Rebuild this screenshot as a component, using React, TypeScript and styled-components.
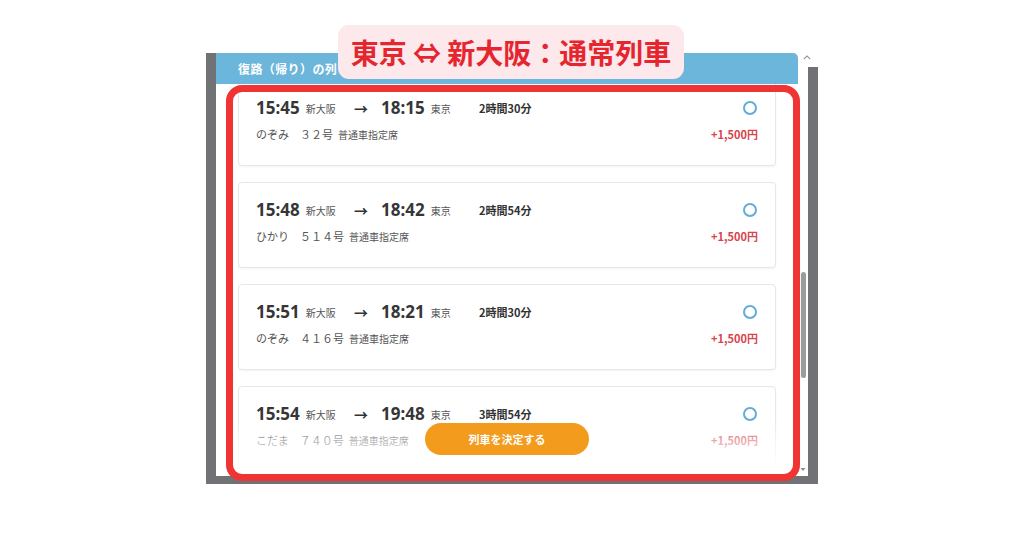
import React from 'react';
import styled, { createGlobalStyle } from 'styled-components';

type Train = {
  dep: string;
  arr: string;
  duration: string;
  name: string;
};

const trains: Train[] = [
  { dep: '15:45', arr: '18:15', duration: '2時間30分', name: 'のぞみ　３２号' },
  { dep: '15:48', arr: '18:42', duration: '2時間54分', name: 'ひかり　５１４号' },
  { dep: '15:51', arr: '18:21', duration: '2時間30分', name: 'のぞみ　４１６号' },
  { dep: '15:54', arr: '19:48', duration: '3時間54分', name: 'こだま　７４０号' },
];

function App() {
  return (
    <>
      <GlobalStyle />
      <Page>
        <Stage>
          <Frame>
            <Window>
              <Panel>
                <Header>
                  <HeaderText>復路（帰り）の列車を選択してください</HeaderText>
                </Header>
                <ListArea>
                  <List>
                    {trains.map((t) => (
                      <Card key={t.dep}>
                        <TopRow>
                          <Stop>
                            <Time>{t.dep}</Time>
                            <Station>新大阪</Station>
                          </Stop>
                          <Arrow>→</Arrow>
                          <Stop>
                            <Time>{t.arr}</Time>
                            <Station>東京</Station>
                          </Stop>
                          <Duration>{t.duration}</Duration>
                          <Radio />
                        </TopRow>
                        <BottomRow>
                          <TrainName>{t.name}</TrainName>
                          <SeatClass>普通車指定席</SeatClass>
                          <Price>+1,500円</Price>
                        </BottomRow>
                      </Card>
                    ))}
                  </List>
                  <Footer>
                    <DecideButton>列車を決定する</DecideButton>
                  </Footer>
                </ListArea>
              </Panel>
              <ScrollTrack>
                <ScrollArrow viewBox="0 0 10 6" $up>
                  <path d="M1 5 L5 1 L9 5" fill="none" stroke="#8a8a8a" strokeWidth="1.3" />
                </ScrollArrow>
                <Thumb />
                <ScrollArrow viewBox="0 0 10 6">
                  <path d="M2 1 L8 1 L5 5 Z" fill="#8a8a8a" />
                </ScrollArrow>
              </ScrollTrack>
            </Window>
          </Frame>
          <Highlight />
          <TitleLabel>東京 ⇔ 新大阪：通常列車</TitleLabel>
        </Stage>
      </Page>
    </>
  );
}
export default App;

const GlobalStyle = createGlobalStyle`
  body {
    margin: 0;
    background: #ffffff;
    font-family: "Noto Sans", "Noto Sans CJK JP", sans-serif;
  }
`;

const Page = styled.div`
  width: 1024px;
  height: 538px;
  display: flex;
  justify-content: center;
  padding-top: 53px;
  box-sizing: border-box;
`;

const Stage = styled.div`
  position: relative;
  width: 612px;
  height: 431px;
`;

const Frame = styled.div`
  position: relative;
  display: flex;
  height: 100%;
  box-sizing: border-box;
  padding: 0 10px 8px 10px;
  background: #717275;

  // white notch above the right gray strip
  &::after {
    content: "";
    position: absolute;
    top: 0;
    right: 0;
    width: 10px;
    height: 14px;
    background: #ffffff;
  }
`;

const Window = styled.div`
  display: flex;
  flex: 1;
  background: #ffffff;
`;

const Panel = styled.div`
  display: flex;
  flex-direction: column;
  width: 582px;
`;

const Header = styled.div`
  height: 31px;
  flex-shrink: 0;
  display: flex;
  align-items: center;
  padding-left: 22px;
  background: #6cb6db;
  border-top-right-radius: 5px;
`;

// the rest of the heading sits under the title label
const HeaderText = styled.span`
  max-width: 100px;
  overflow: hidden;
  white-space: nowrap;
  color: #ffffff;
  font-family: "Noto Sans CJK JP", sans-serif;
  font-size: 12px;
  font-weight: 700;
  letter-spacing: 0.4px;
`;

const ListArea = styled.div`
  position: relative;
  flex: 1;
  overflow: hidden;
`;

const List = styled.div`
  display: flex;
  flex-direction: column;
  gap: 16px;
  padding: 0 22px;
  margin-top: -4px;
`;

const Card = styled.div`
  height: 86px;
  box-sizing: border-box;
  flex-shrink: 0;
  padding: 17px 18px 0 17px;
  border: 1px solid #e7e7e7;
  border-radius: 4px;
  box-shadow: 0 1px 2px rgba(0, 0, 0, 0.05);
  background: #ffffff;
`;

const TopRow = styled.div`
  display: grid;
  grid-template-columns: 98px 27px 98px auto 1fr;
  align-items: center;
  height: 20px;
`;

const Stop = styled.div`
  display: flex;
  align-items: center;
`;

const Time = styled.span`
  font-size: 17px;
  font-weight: 700;
  color: #363636;
  line-height: 20px;
`;

const Station = styled.span`
  margin-left: 6px;
  font-family: "Noto Sans CJK JP", sans-serif;
  font-size: 10px;
  color: #555555;
`;

const Arrow = styled.span`
  font-size: 14px;
  font-weight: 700;
  color: #333333;
`;

const Duration = styled.span`
  font-family: "Noto Sans CJK JP", sans-serif;
  font-size: 11px;
  font-weight: 700;
  color: #333333;
`;

const Radio = styled.span`
  justify-self: end;
  width: 14px;
  height: 14px;
  box-sizing: border-box;
  border: 2px solid #62acd8;
  border-radius: 50%;
`;

const BottomRow = styled.div`
  display: flex;
  align-items: center;
  height: 16px;
  margin-top: 8px;
  font-family: "Noto Sans CJK JP", sans-serif;
`;

const TrainName = styled.span`
  font-size: 11px;
  color: #555555;
`;

const SeatClass = styled.span`
  margin-left: 5px;
  font-size: 10px;
  color: #555555;
`;

const Price = styled.span`
  margin-left: auto;
  margin-right: -1px;
  font-size: 11px;
  font-weight: 700;
  color: #d8444b;
`;

const Footer = styled.div`
  position: absolute;
  left: 0;
  right: 0;
  bottom: 0;
  height: 57px;
  display: flex;
  justify-content: center;
  padding-top: 4px;
  box-sizing: border-box;
  background: linear-gradient(
    rgba(255, 255, 255, 0) 0%,
    rgba(255, 255, 255, 0.55) 38%,
    #ffffff 85%
  );
`;

const DecideButton = styled.button`
  width: 164px;
  height: 32px;
  border: none;
  border-radius: 16px;
  background: #f29b1c;
  color: #ffffff;
  font-family: "Noto Sans CJK JP", sans-serif;
  font-size: 11px;
  font-weight: 700;
  cursor: pointer;
`;

const ScrollTrack = styled.div`
  position: relative;
  z-index: 1;
  width: 10px;
  display: flex;
  flex-direction: column;
  align-items: center;
`;

const ScrollArrow = styled.svg<{ $up?: boolean }>`
  width: 8px;
  height: 5px;
  margin-top: ${(p) => (p.$up ? '2px' : 'auto')};
  margin-bottom: ${(p) => (p.$up ? '0' : '4px')};
  margin-left: ${(p) => (p.$up ? '8px' : '0')};
`;

const Thumb = styled.div`
  width: 5px;
  height: 106px;
  margin-top: 212px;
  border-radius: 3px;
  background: #9b9b9d;
`;

const Highlight = styled.div`
  position: absolute;
  left: 20px;
  top: 32px;
  width: 574px;
  height: 396px;
  box-sizing: border-box;
  border: 7px solid #f03434;
  border-radius: 16px;
  pointer-events: none;
`;

const TitleLabel = styled.div`
  position: absolute;
  left: 132px;
  top: -28px;
  width: 346px;
  height: 54px;
  display: flex;
  align-items: center;
  justify-content: center;
  border-radius: 11px;
  background: #fde8eb;
  color: #e6262f;
  font-family: "Noto Sans CJK JP", sans-serif;
  font-size: 28px;
  font-weight: 700;
  white-space: nowrap;
`;
